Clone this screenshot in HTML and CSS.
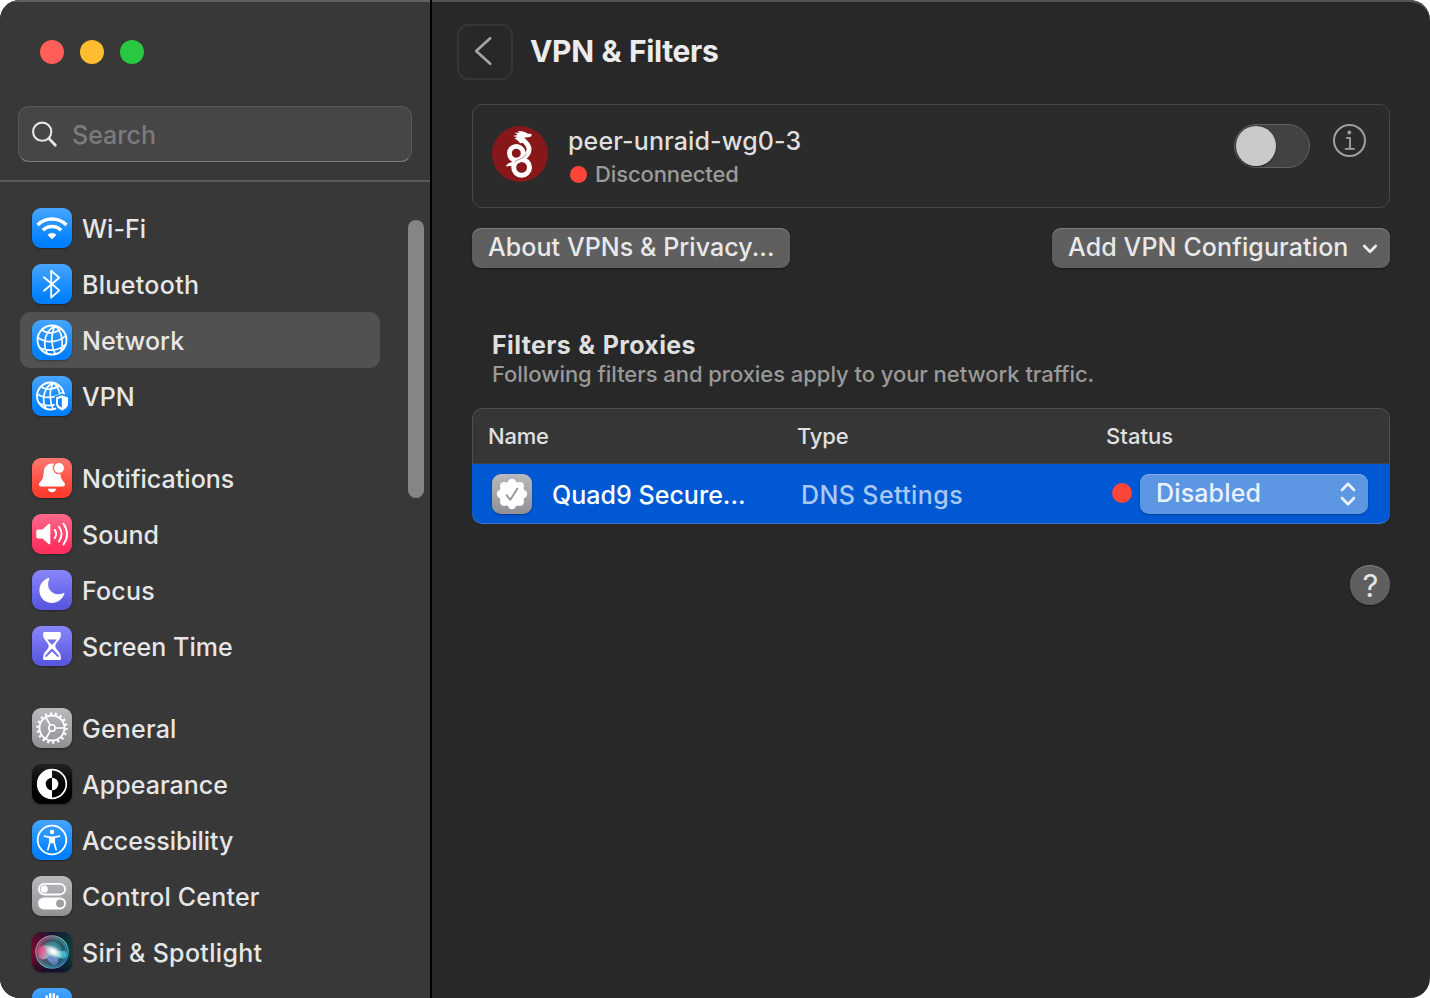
FILE: index.html
```html
<!DOCTYPE html>
<html lang="en">
<head>
<meta charset="utf-8">
<title>VPN &amp; Filters</title>
<link rel="stylesheet" href="styles.css">
</head>
<body>
<svg class="defs" width="0" height="0" aria-hidden="true">
  <defs>
    <linearGradient id="siriBg" x1="0" y1="0" x2="1" y2="0"><stop offset="0" stop-color="#7a0a2e"/><stop offset=".5" stop-color="#1c1440"/><stop offset="1" stop-color="#06453f"/></linearGradient>
    <linearGradient id="siriShade" x1="0" y1="0" x2="0" y2="1"><stop offset="0" stop-color="#101018" stop-opacity=".3"/><stop offset=".55" stop-color="#101018" stop-opacity="0"/><stop offset="1" stop-color="#0a0a20" stop-opacity=".65"/></linearGradient>
    <linearGradient id="siriFill" x1="0" y1=".3" x2="1" y2=".6"><stop offset="0" stop-color="#a03a70"/><stop offset=".5" stop-color="#3f7f8c"/><stop offset="1" stop-color="#176b80"/></linearGradient>
    <linearGradient id="siriOrb" x1="0" y1=".4" x2="1" y2=".6"><stop offset="0" stop-color="#e83a72"/><stop offset=".45" stop-color="#a9b9d0"/><stop offset="1" stop-color="#2ab2c8"/></linearGradient>
    <linearGradient id="siriRing" x1="0" y1="0" x2="1" y2="1"><stop offset="0" stop-color="#e05a80"/><stop offset=".5" stop-color="#58b8a8"/><stop offset="1" stop-color="#4a70d0"/></linearGradient>
    <radialGradient id="siriGlow"><stop offset="0" stop-color="#fff"/><stop offset=".35" stop-color="#fff" stop-opacity=".8"/><stop offset="1" stop-color="#fff" stop-opacity="0"/></radialGradient>
  </defs>
</svg>
<div class="window">
  <aside class="sidebar">
    <div class="lights"><i class="light red"></i><i class="light yellow"></i><i class="light green"></i></div>
    <div class="search">
      <svg width="28" height="28" viewBox="0 0 28 28" fill="none" stroke="#e8e8e8" stroke-width="2.1" stroke-linecap="round"><circle cx="11.2" cy="11.7" r="9.1"/><path d="M17.9 18.5l6.5 6.7" stroke-width="2.7"/></svg>
      <span>Search</span>
    </div>
    <nav class="list">
      <div class="group">
        <div class="item"><span class="tile blue"><svg viewBox="0 0 40 40"><g fill="none" stroke="#fff" stroke-width="3.5"><path d="M5.600 17.100a20.300 20.300 0 0 1 28.800 0"/><path d="M10.900 22.300a12.900 12.900 0 0 1 18.200 0"/></g><path d="M20 31l-4.200-4.100a6 6 0 0 1 8.400 0z" fill="#fff" stroke="#fff" stroke-width=".6" stroke-linejoin="round"/></svg></span><span class="label tight">Wi-Fi</span></div>
        <div class="item"><span class="tile blue"><svg viewBox="0 0 40 40" fill="none" stroke="#fff" stroke-width="1.900" stroke-linejoin="round" stroke-linecap="round"><path d="M12 13.300l15.200 13.100-8 7.200V6.600l8 7.100L12 26.700"/></svg></span><span class="label wide">Bluetooth</span></div>
        <div class="item selected"><span class="tile blue"><svg viewBox="0 0 40 40" fill="none" stroke="#fff" stroke-width="1.700"><circle cx="20" cy="20" r="14.500" stroke-width="1.900"/><path d="M23 5.700C13 11 10 24 15.400 33.800M23 5.700C18.800 14 18.800 25 23.100 34.200M23 5.700C29.500 11 31.800 21 29 31.200M9.600 9.600C14 13.500 22 14.700 29.300 8.600M5.800 17.400C13 23.300 26 23.300 33.800 15.500M7.700 27.800C16 31.600 26 31.200 33.800 24.300"/></svg></span><span class="label tight">Network</span></div>
        <div class="item"><span class="tile blue"><svg viewBox="0 0 40 40"><g fill="none" stroke="#fff" stroke-width="1.700"><circle cx="18.500" cy="20" r="13.500" stroke-width="1.900"/><path d="M21.200 6.600C12 11.500 9 23.500 14.200 33M21.200 6.600C17 14.500 17.400 25 21.200 33.400M21.200 6.600C27 11 29 19 27.400 28M9 10.300C13 14 20.500 14.500 27.200 9.500M5.300 17.800C12 23 24 22.800 31.400 15.800M7 27.200C14.500 30.700 20 30.600 27 27"/></g><path d="M30 17.400l7.500 3v7c0 4.800-3.200 7-7.500 8.600-4.300-1.600-7.500-3.800-7.500-8.600v-7z" fill="#148aff"/><path d="M30 19.300l6 2.300v6c0 3.400-2.400 5.300-6 6.800-3.600-1.500-6-3.400-6-6.800v-6z" fill="#fff"/><path d="M29.800 21.700v10c-2.500-1.200-3.800-2.400-3.800-4.600v-4z" fill="#0d86ff"/></svg></span><span class="label tight">VPN</span></div>
      </div>
      <div class="group">
        <div class="item"><span class="tile coral"><svg viewBox="0 0 40 40"><path d="M20 5.400c-5 0-7.800 3.600-8.200 8.400-.4 5-.8 7.300-3.700 10.300-1.700 1.700-1.400 4.400 1 4.400h21.800c2.400 0 2.700-2.700 1-4.400-2.900-3-3.300-5.300-3.700-10.300-.4-4.800-3.200-8.400-8.200-8.400z" fill="#fff"/><path d="M15.800 30.800h8.400c-.4 2-2 3.400-4.200 3.400s-3.800-1.400-4.200-3.400z" fill="#fff"/><circle cx="27" cy="10" r="6.300" fill="#fe6d62"/><circle cx="27" cy="10" r="4.900" fill="#fff"/></svg></span><span class="label tight">Notifications</span></div>
        <div class="item"><span class="tile pink"><svg viewBox="0 0 40 40"><path d="M4.300 17.500c0-1.300.7-2 2-2h4.200l6-5.400c.9-.8 1.800-.4 1.800.8v18.200c0 1.200-.9 1.600-1.800.8l-6-5.300H6.300c-1.300 0-2-.7-2-2z" fill="#fff"/><g fill="none" stroke="#fff" stroke-width="1.900" stroke-linecap="round"><path d="M22.700 15.900c1.800 2.600 1.800 5.800 0 8.400"/><path d="M27 12.800c3.200 4.500 3.200 10.100 0 14.600"/><path d="M31.500 9.800c4.700 6.300 4.700 14.300 0 20.600"/></g></svg></span><span class="label tight">Sound</span></div>
        <div class="item"><span class="tile indigo"><svg viewBox="0 0 40 40"><path d="M16.300 8.100c.7-.3 1.200.2.900.9-4.300 10 4.500 18.300 14.200 14.200.8-.3 1.300.2 1 .9C30 29.700 25.700 33 20 33 13 33 7.400 27.600 7.400 20.500c0-5.700 3.600-10.500 8.900-12.400z" fill="#fff"/></svg></span><span class="label">Focus</span></div>
        <div class="item"><span class="tile indigo"><svg viewBox="0 0 40 40"><path d="M12.800 6h14.400c1 0 1.700.7 1.700 1.600v1.100c0 5.500-5.600 7.700-5.600 11.300s5.600 5.800 5.600 11.300v1.100c0 .9-.7 1.600-1.700 1.600H12.800c-1 0-1.700-.7-1.700-1.600v-1.100c0-5.500 5.600-7.700 5.600-11.300s-5.600-5.800-5.600-11.300V7.600c0-.9.7-1.600 1.700-1.600z" fill="#fff"/><path d="M15.200 13.400h9.600c-1 1.900-3.200 3.300-4.100 5.200h-1.400c-.9-1.900-3.100-3.300-4.100-5.200zM19.200 23l-6 6.500c-.3 1.700 1 1.600 1.700.9L20 25.600l5.100 4.800c.7.700 2 .8 1.700-.9l-6-6.500z" fill="#7371ee"/></svg></span><span class="label tight">Screen Time</span></div>
      </div>
      <div class="group">
        <div class="item"><span class="tile gray"><svg viewBox="0 0 40 40" fill="none" stroke="#fff"><circle cx="20" cy="20" r="14.500" stroke-width="2.500" stroke-dasharray="2.200 2.860"/><circle cx="20" cy="20" r="12.500" stroke-width="1.800"/><circle cx="20" cy="20" r="3.200" stroke-width="1.600"/><path d="M23.200 20H32.500M18.400 17.200L13.700 9.200M18.400 22.800L13.700 30.800" stroke-width="1.700"/></svg></span><span class="label">General</span></div>
        <div class="item"><span class="tile black"><svg viewBox="0 0 40 40"><circle cx="20" cy="20" r="14.300" fill="none" stroke="#fff" stroke-width="1.700"/><path d="M20 5.700a14.300 14.300 0 0 0 0 28.600v-8a6.300 6.300 0 0 1 0-12.600z" fill="#fff"/><path d="M20 13.700a6.300 6.300 0 0 1 0 12.600z" fill="#fff"/></svg></span><span class="label tight">Appearance</span></div>
        <div class="item"><span class="tile blue"><svg viewBox="0 0 40 40"><circle cx="20" cy="20" r="14.300" fill="none" stroke="#fff" stroke-width="1.800"/><circle cx="20" cy="12" r="2.200" fill="#fff"/><path d="M12.600 16.200l5.300 1.100v5l-2 7.300M27.400 16.200l-5.300 1.100v5l2 7.300" fill="none" stroke="#fff" stroke-width="1.700" stroke-linecap="round" stroke-linejoin="round"/><path d="M17.200 16.500h5.600v6.800h-5.600z" fill="#fff"/></svg></span><span class="label snug">Accessibility</span></div>
        <div class="item"><span class="tile gray"><svg viewBox="0 0 40 40"><rect x="6.900" y="7.900" width="26.200" height="10.600" rx="5.300" fill="none" stroke="#fff" stroke-width="1.800"/><circle cx="12.200" cy="13.200" r="3.600" fill="#fff"/><rect x="6" y="21.500" width="28" height="12" rx="6" fill="#fff"/><circle cx="28.100" cy="27.500" r="4" fill="#9e9ea3"/></svg></span><span class="label">Control Center</span></div>
        <div class="item"><span class="tile"><svg viewBox="0 0 40 40"><rect width="40" height="40" fill="url(#siriBg)"/><rect width="40" height="40" fill="url(#siriShade)"/><circle cx="20" cy="20" r="16.200" fill="url(#siriFill)" fill-opacity=".7" stroke="url(#siriRing)" stroke-width="1.200"/><circle cx="20" cy="20" r="14.300" fill="none" stroke="url(#siriRing)" stroke-width=".7"/><path d="M6 20C6 12 15 11 21 17s10-1 13 3-1 8-6 6-8-5-12-1S6 28 6 20z" fill="url(#siriOrb)"/><path d="M12 13c6-7 17-3 18 6s-8 13-14 9 2-8 0-10-7 0-4-5z" fill="#4bd0c0" opacity=".35"/><path d="M15 25c5-4 13 0 11 5s-9 3-11-5z" fill="#8a92e8" opacity=".6"/><ellipse cx="21.500" cy="19.500" rx="10" ry="6" fill="url(#siriGlow)" transform="rotate(30 21.500 19.500)"/></svg></span><span class="label wide">Siri &amp; Spotlight</span></div>
        <div class="item"><span class="tile blue"><svg viewBox="0 0 40 40" fill="none" stroke="#fff" stroke-width="2.400" stroke-linecap="round"><path d="M14.600 18V8.500M18.200 18V6.300M21.800 18V6.300M25.400 18V8.500"/><path d="M14 18h12v10H17l-4-6z" fill="#fff"/></svg></span></div>
      </div>
    </nav>
    <div class="scrollbar"></div>
  </aside>
  <main class="pane">
    <header class="top">
      <span class="back"><svg width="52" height="52" viewBox="0 0 52 52" fill="none" stroke="#a5a5a5" stroke-width="2.700" stroke-linecap="round" stroke-linejoin="round"><path d="M31.200 12.200L17.200 25 31.200 37.800"/></svg></span>
      <h1>VPN &amp; Filters</h1>
    </header>
    <section class="card">
      <svg class="wg" width="56" height="56" viewBox="0 0 56 56"><circle cx="28" cy="28" r="28" fill="#88171a"/><g fill="none" stroke="#fff"><circle cx="24.300" cy="27.300" r="6.900" stroke-width="4.800"/><path d="M29 10.500c1.500 5 8.100 6 8.100 12.700 0 8.500-12 10.800-15 14" stroke-width="4.800"/><circle cx="29.600" cy="41.400" r="7.900" stroke-width="5"/><path d="M34.800 27.500c-2 3.800-5.800 5-9.200 6.600-2.500 1.200-4.600 2.800-5.600 5" stroke="#88171a" stroke-width=".5"/></g><path d="M23 35.400c-4 .3-7.500 1.800-9.200 5.200 2.600-1 4.700-.3 7.200-1.200z" fill="#fff"/><path d="M22 12.600c1.500-.4 2.500-1 3.300-1.900-1.600.5-2.700-.2-4.200-1 2.200.2 3.200-.1 4.500-1.100-1-.9-2.100-1.200-3.400-1.500 2-.5 3.400-.4 5-.2-.4-.6-1-1.100-1.700-1.400 3-.5 6.600-.4 9.200 1.600.8.700 2.400.8 4.800 1v2.200l-2.900 1-3.600.1c-1.200.1-1.700.8-1 2.100l1.800 3-5.300.8c-2.200-1.400-2.700-3.800-6.500-4.700z" fill="#fff"/></svg>
      <div class="peer">
        <div class="peer-name">peer-unraid-wg0-3</div>
        <div class="peer-state"><i class="dot"></i><span>Disconnected</span></div>
      </div>
      <div class="switch"><i></i></div>
      <svg class="info" width="34" height="34" viewBox="0 0 34 34" fill="none" stroke="#a0a0a0"><circle cx="16.500" cy="16.500" r="15.500" stroke-width="2"/><circle cx="16.300" cy="8.500" r="1.900" fill="#a0a0a0" stroke="none"/><path d="M13.700 13.900h3.300v10.800M12.700 24.900h8.300" stroke-width="1.900" stroke-linecap="round" stroke-linejoin="round"/></svg>
    </section>
    <div class="actions">
      <div class="button"><span>About VPNs &amp; Privacy...</span></div>
      <div class="button add"><span>Add VPN Configuration</span><svg width="16" height="12" viewBox="0 0 16 12" fill="none" stroke="#ececec" stroke-width="2.800" stroke-linecap="round" stroke-linejoin="round"><path d="M2.300 3l5.700 5.700L13.700 3"/></svg></div>
    </div>
    <div class="heading">
      <h2>Filters &amp; Proxies</h2>
      <p>Following filters and proxies apply to your network traffic.</p>
    </div>
    <section class="table">
      <div class="row head"><span>Name</span><span>Type</span><span>Status</span></div>
      <div class="row body">
        <div class="name"><span class="tile gray"><svg viewBox="0 0 40 40"><g fill="#fff"><circle cx="20" cy="20" r="12.700"/><circle cx="20" cy="9" r="4.200"/><circle cx="27.800" cy="12.200" r="4.200"/><circle cx="31" cy="20" r="4.200"/><circle cx="27.800" cy="27.800" r="4.200"/><circle cx="20" cy="31" r="4.200"/><circle cx="12.200" cy="27.800" r="4.200"/><circle cx="9" cy="20" r="4.200"/><circle cx="12.200" cy="12.200" r="4.200"/></g><path d="M14.800 21.300l3.500 4.500 7-11" fill="none" stroke="#98989c" stroke-width="2" stroke-linecap="round" stroke-linejoin="round"/></svg></span><span class="filter">Quad9 Secure...</span></div>
        <div class="type">DNS Settings</div>
        <div class="status"><i class="dot big"></i><div class="popup"><span>Disabled</span><svg width="18" height="26" viewBox="0 0 18 26" fill="none" stroke="#e9f1fd" stroke-width="2.700" stroke-linecap="round" stroke-linejoin="round"><path d="M3 9l6-6.200L15 9M3 17l6 6.200L15 17"/></svg></div></div>
      </div>
    </section>
    <div class="help">?</div>
  </main>
</div>
</body>
</html>
```
FILE: styles.css
```css
* { box-sizing: border-box; }
body { margin: 0; background: #fff; font-family: Inter, "Liberation Sans", sans-serif; font-size: 25px; font-weight: 450; color: #e6e6e6; overflow: hidden; }
.defs { display: block; position: absolute; }
.window { position: relative; display: flex; width: 1430px; height: 998px; border-radius: 20px; overflow: hidden; background: #282828; box-shadow: inset 0 2px #555; white-space: nowrap; }
.sidebar { position: relative; width: 432px; height: 998px; background: #383838; border-right: 2px solid #000; box-shadow: inset 0 2px #606060; overflow: hidden; }
.lights { display: flex; gap: 16px; padding: 40px 0 0 40px; }
.light { width: 24px; height: 24px; border-radius: 50%; }
.red { background: #ff5f57; }
.yellow { background: #febc2e; }
.green { background: #28c840; }
.search { display: flex; align-items: center; gap: 13px; width: 394px; height: 56px; margin: 42px 18px 18px; padding-left: 12px; border-radius: 11px; background: #464646; border: 1px solid #585858; border-bottom-color: #7c7c7c; color: #7b7b7b; }
.search svg { display: block; }
.search span { padding-top: 2px; }
.list { border-top: 2px solid #5b5b5b; padding: 18px 0 0 20px; }
.group { margin-bottom: 26px; }
.item { display: flex; align-items: center; gap: 10px; width: 360px; height: 56px; padding-left: 12px; border-radius: 10px; }
.label { padding-top: 2px; letter-spacing: .2px; }
.label.wide { letter-spacing: .32px; }
.label.tight { letter-spacing: .03px; }
.label.snug { letter-spacing: -.06px; }
.selected { background: #515151; }
.tile { flex: none; display: block; width: 40px; height: 40px; border-radius: 9px; overflow: hidden; box-shadow: 0 1px 2px rgba(0,0,0,.35); }
.tile svg { display: block; width: 40px; height: 40px; }
.blue { background: linear-gradient(#47a5ff, #0080ff 85%); }
.coral { background: linear-gradient(#ff796f, #ff3d30 85%); }
.pink { background: linear-gradient(#ff6a8c, #ff305d 85%); }
.indigo { background: linear-gradient(#8987fb, #5a58e0 90%); }
.gray { background: linear-gradient(#b9b9be, #909095); }
.black { background: linear-gradient(#222, #000 60%); }
.scrollbar { position: absolute; left: 408px; top: 220px; width: 16px; height: 278px; border-radius: 8px; background: #858585; }

.pane { flex: 1; padding: 0 40px; display: flex; flex-direction: column; }
.top { display: flex; align-items: center; gap: 17px; height: 56px; margin: 24px 0 24px -15px; }
.back { width: 56px; height: 56px; border: 2px solid #353535; border-radius: 11px; }
.back svg { display: block; }
h1 { margin: -2px 0 0; font-size: 30px; font-weight: 700; line-height: 54px; color: #ececec; letter-spacing: -.35px; word-spacing: 1px; }
.card { display: flex; align-items: flex-start; height: 104px; padding: 19px 22px 0 19px; border: 1px solid #484848; border-radius: 10px; background: #2b2b2b; }
.wg { flex: none; display: block; margin-top: 2px; }
.peer { margin-left: 20px; flex: 1; }
.peer-name { line-height: 34px; color: #dfdfdf; letter-spacing: .13px; }
.peer-state { display: flex; align-items: center; gap: 8px; font-size: 22px; line-height: 32px; color: #9b9b9b; padding-left: 2px; letter-spacing: -.12px; }
.dot { width: 17px; height: 17px; border-radius: 50%; background: #ff453a; }
.switch { width: 76px; height: 44px; border-radius: 22px; border: 1px solid #606060; background: #424242; padding: 1px; }
.switch i { display: block; width: 40px; height: 40px; border-radius: 50%; background: #cacaca; box-shadow: 0 1px 2px rgba(0,0,0,.5); }
.info { display: block; margin-left: 23px; }
.actions { display: flex; justify-content: space-between; margin-top: 20px; }
.button { display: flex; align-items: center; height: 40px; width: 318px; padding: 0 16px 2px; border-radius: 9px; background: #5f5f5f; box-shadow: inset 0 1px #7c7c7c, 0 1px 2px rgba(0,0,0,.4); color: #e9e9e9; letter-spacing: .07px; }
.add { width: 338px; justify-content: space-between; padding-right: 12px; letter-spacing: .12px; }
.add svg { margin-top: 4px; }
.heading { margin: 60px 0 0 20px; }
h2 { margin: 0; font-size: 25px; line-height: 34px; font-weight: 700; color: #dfdfdf; letter-spacing: .35px; word-spacing: 1px; }
p { margin: -1px 0 1px; font-size: 22px; line-height: 26px; color: #999; letter-spacing: -.05px; }
.table { margin-top: 20px; height: 116px; border-radius: 10px; overflow: hidden; background: #363636; }
.row { display: grid; grid-template-columns: 309px 309px 1fr; align-items: center; }
.head { height: 56px; padding-left: 15px; font-size: 22px; color: #e0e0e0; border: 1px solid #505050; border-bottom-color: #444; border-radius: 10px 10px 0 0; letter-spacing: -.2px; }
.head span:last-child { letter-spacing: .05px; }
.body { height: 60px; padding-left: 20px; background: #0059d3; color: #fff; box-shadow: inset 0 -1px #3f79c8; border-radius: 0 0 10px 10px; }
.name { display: flex; align-items: center; gap: 20px; }
.filter { padding-top: 2px; letter-spacing: .03px; }
.type { color: #a9c8f1; padding-top: 2px; letter-spacing: .4px; }
.status { display: flex; align-items: center; gap: 8px; margin-left: 2px; }
.big { width: 20px; height: 20px; margin-top: -2px; }
.popup { display: flex; align-items: center; justify-content: space-between; width: 228px; height: 40px; padding: 0 11px 0 16px; border-radius: 9px; background: #5d96e3; color: #eaf2fd; box-shadow: inset 0 1px #7facea, 0 1px 2px rgba(0,0,0,.3); letter-spacing: .15px; }
.popup span { margin-top: -2px; }
.help { align-self: flex-end; width: 40px; height: 40px; margin-top: 41px; padding-left: 1px; border-radius: 50%; background: #5f5f5f; box-shadow: inset 0 1px #7c7c7c, 0 1px 2px rgba(0,0,0,.4); text-align: center; font-size: 31px; line-height: 41px; font-weight: 400; }
```
